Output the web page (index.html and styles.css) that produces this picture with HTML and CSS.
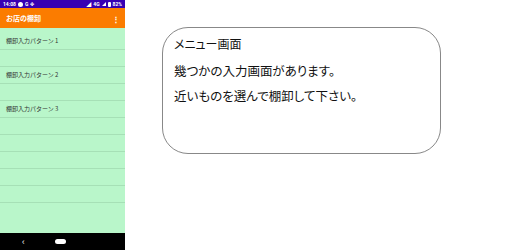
FILE: index.html
```html
<!DOCTYPE html>
<html>
  <head>
    <title>メニュー画面</title>
    <link rel="stylesheet" href="styles.css">
  </head>
  <body>
    <div class="screen">

      <div class="phone">
        <div class="status-bar">
          <div class="status-left">
            <span class="clock">14:08</span>
            <span class="dot-icon"></span>
            <span class="g-icon">G</span>
            <span class="small-icon">✤</span>
          </div>
          <div class="status-right">
            <span class="small-icon">◢</span>
            <span class="net">4G</span>
            <span class="signal"></span>
            <span class="battery"></span>
            <span class="pct">82%</span>
          </div>
        </div>

        <div class="toolbar">
          <span class="toolbar-title">お店の棚卸</span>
          <span class="menu-dots">⋮</span>
        </div>

        <ul class="list">
          <li>棚卸入力パターン 1</li>
          <li></li>
          <li>棚卸入力パターン 2</li>
          <li></li>
          <li>棚卸入力パターン 3</li>
          <li></li>
          <li></li>
          <li></li>
          <li></li>
          <li></li>
        </ul>

        <div class="nav-bar">
          <span class="nav-back">‹</span>
          <span class="nav-home"></span>
        </div>
      </div>

      <div class="content">
        <div class="menu-box">
          <p class="menu-title">メニュー画面</p>
          <p>幾つかの入力画面があります。</p>
          <p>近いものを選んで棚卸して下さい。</p>
        </div>
      </div>

    </div>
  </body>
</html>
```

FILE: styles.css
```css
body {
  margin: 0;
  background-color: #fff;
  font-family: "Noto Sans CJK JP", "Noto Sans", sans-serif;
  color: #212121;
}

.screen {
  display: flex;
  width: 512px;
  height: 250px;
}

/* left : phone */
.phone {
  width: 125px;
  height: 250px;
  display: flex;
  flex-direction: column;
  background-color: #b9f6ca;
}

.status-bar {
  height: 8px;
  background-color: #3700b3;
  color: #fff;
  display: flex;
  justify-content: space-between;
  align-items: center;
  padding: 0 3px;
  font-size: 5px;
  line-height: 8px;
}

.status-left, .status-right {
  display: flex;
  align-items: center;
  gap: 2px;
}

.clock {
  font-weight: bold;
  font-family: "Roboto", sans-serif;
}

.dot-icon {
  width: 5px;
  height: 5px;
  border-radius: 50%;
  background-color: #fff;
}

.g-icon {
  font-weight: bold;
  font-family: "Roboto", sans-serif;
}

.small-icon {
  font-size: 5px;
}

.net, .pct {
  font-family: "Roboto", sans-serif;
  font-weight: bold;
}

.signal {
  width: 0;
  height: 0;
  border-left: 4px solid transparent;
  border-bottom: 4px solid #fff;
}

.battery {
  width: 3px;
  height: 5px;
  background-color: #fff;
  border-radius: 1px;
}

.toolbar {
  height: 20px;
  background-color: #fb7c00;
  color: #fff;
  display: flex;
  justify-content: space-between;
  align-items: center;
  padding: 0 5px 0 6px;
}

.toolbar-title {
  font-size: 7px;
  font-weight: bold;
}

.menu-dots {
  font-size: 8px;
  font-weight: bold;
}

.list {
  list-style: none;
  margin: 0;
  padding: 5px 0 0 0;
  flex: 1;
}

.list li {
  height: 16px;
  line-height: 16px;
  border-bottom: 1px solid #a6e0b6;
  font-size: 6px;
  color: #333;
  padding-left: 6px;
}

.nav-bar {
  height: 17px;
  background-color: #000;
  display: flex;
  align-items: center;
  color: #fff;
}

.nav-back {
  margin-left: 22px;
  font-size: 9px;
  line-height: 9px;
}

.nav-home {
  margin-left: 30px;
  width: 11px;
  height: 5px;
  border-radius: 3px;
  background-color: #fff;
}

/* right : content */
.content {
  flex: 1;
  padding: 27px 0 0 37px;
}

.menu-box {
  width: 279px;
  height: 127px;
  border: 1px solid #888;
  border-radius: 26px;
  padding: 0 0 0 11px;
  box-sizing: border-box;
}

.menu-box p {
  margin: 0;
  font-size: 12.5px;
  line-height: 25px;
  color: #111;
  font-feature-settings: "palt";
}

.menu-box .menu-title {
  font-size: 12px;
  margin-top: 3px;
  margin-bottom: 2px;
}
```
